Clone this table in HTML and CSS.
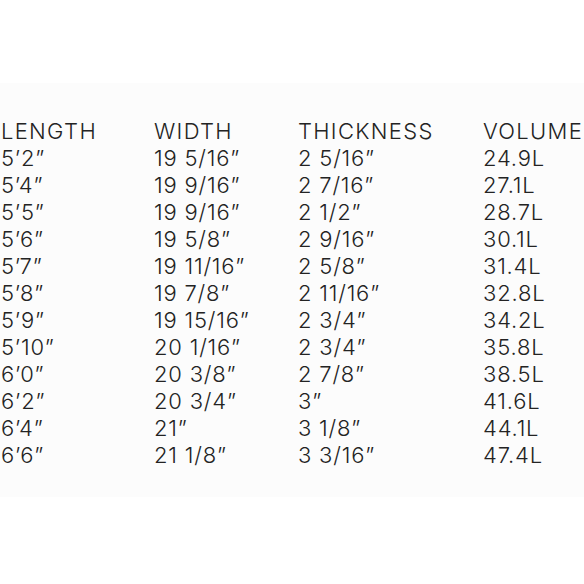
FILE: index.html
```html
<!DOCTYPE html>
<html>
<head>
<meta charset="utf-8">
<link rel="stylesheet" href="styles.css">
</head>
<body>
<div class="band">
  <div class="table">
    <div class="cell head">LENGTH</div><div class="cell head">WIDTH</div><div class="cell head">THICKNESS</div><div class="cell head">VOLUME</div>
    <div class="cell">5’2”</div><div class="cell">19 5/16”</div><div class="cell">2 5/16”</div><div class="cell">24.9L</div>
    <div class="cell">5’4”</div><div class="cell">19 9/16”</div><div class="cell">2 7/16”</div><div class="cell">27.1L</div>
    <div class="cell">5’5”</div><div class="cell">19 9/16”</div><div class="cell">2 1/2”</div><div class="cell">28.7L</div>
    <div class="cell">5’6”</div><div class="cell">19 5/8”</div><div class="cell">2 9/16”</div><div class="cell">30.1L</div>
    <div class="cell">5’7”</div><div class="cell">19 11/16”</div><div class="cell">2 5/8”</div><div class="cell">31.4L</div>
    <div class="cell">5’8”</div><div class="cell">19 7/8”</div><div class="cell">2 11/16”</div><div class="cell">32.8L</div>
    <div class="cell">5’9”</div><div class="cell">19 15/16”</div><div class="cell">2 3/4”</div><div class="cell">34.2L</div>
    <div class="cell">5’10”</div><div class="cell">20 1/16”</div><div class="cell">2 3/4”</div><div class="cell">35.8L</div>
    <div class="cell">6’0”</div><div class="cell">20 3/8”</div><div class="cell">2 7/8”</div><div class="cell">38.5L</div>
    <div class="cell">6’2”</div><div class="cell">20 3/4”</div><div class="cell">3”</div><div class="cell">41.6L</div>
    <div class="cell">6’4”</div><div class="cell">21”</div><div class="cell">3 1/8”</div><div class="cell">44.1L</div>
    <div class="cell">6’6”</div><div class="cell">21 1/8”</div><div class="cell">3 3/16”</div><div class="cell">47.4L</div>
  </div>
</div>
</body>
</html>
```
FILE: styles.css
```css
html, body {
  margin: 0;
  padding: 0;
  background: #ffffff;
  width: 584px;
  height: 584px;
  overflow: hidden;
}
.band {
  margin-top: 83px;
  height: 414px;
  background: #fcfcfc;
  padding-top: 35px;
  box-sizing: border-box;
}
.table {
  display: grid;
  grid-template-columns: 153px 144px 185px auto;
  font-family: "Inter", sans-serif;
  font-weight: 350;
  font-size: 22px;
  line-height: 27px;
  color: #232323;
  white-space: nowrap;
  letter-spacing: 0.8px;
}
.cell {
  padding-left: 1px;
}
.head {
  letter-spacing: 1.3px;
}
```
